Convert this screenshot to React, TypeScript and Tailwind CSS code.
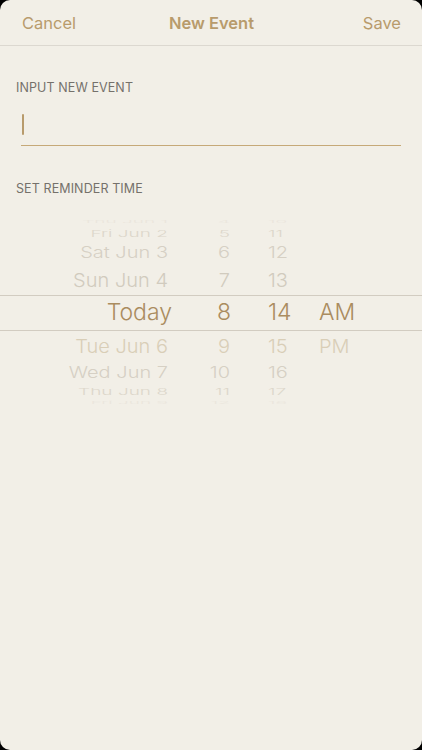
import React from "react";

type Row = {
  h: string;
  scale: string;
  date: string;
  hour: string;
  min: string;
  ampm?: string;
  color: string;
  size: string;
};

const rows: Row[] = [
  { h: "h-[10px]", scale: "scale-y-[0.2]", date: "Thu Jun 1", hour: "4", min: "10", color: "text-[#ebe6dd]", size: "text-[19px]" },
  { h: "h-[14px]", scale: "scale-y-[0.5]", date: "Fri Jun 2", hour: "5", min: "11", color: "text-[#ddd7cb]", size: "text-[19px]" },
  { h: "h-[24px]", scale: "scale-y-[0.78]", date: "Sat Jun 3", hour: "6", min: "12", color: "text-[#d6d0c4]", size: "text-[20px]" },
  { h: "h-[30px]", scale: "scale-y-[0.93]", date: "Sun Jun 4", hour: "7", min: "13", color: "text-[#d1cbbe]", size: "text-[20px]" },
];

const rowsBelow: Row[] = [
  { h: "h-[30px]", scale: "scale-y-[0.93]", date: "Tue Jun 6", hour: "9", min: "15", ampm: "PM", color: "text-[#d9ceb7]", size: "text-[20px]" },
  { h: "h-[24px]", scale: "scale-y-[0.78]", date: "Wed Jun 7", hour: "10", min: "16", color: "text-[#d6d0c4]", size: "text-[20px]" },
  { h: "h-[14px]", scale: "scale-y-[0.5]", date: "Thu Jun 8", hour: "11", min: "17", color: "text-[#ddd7cb]", size: "text-[19px]" },
  { h: "h-[8px]", scale: "scale-y-[0.2]", date: "Fri Jun 9", hour: "12", min: "18", color: "text-[#ebe6dd]", size: "text-[19px]" },
];

function PickerRow({ r }: { r: Row }) {
  return (
    <div className={`${r.h} flex items-center overflow-hidden ${r.color} ${r.size} font-light`}>
      <div className={`flex w-full items-center ${r.scale} leading-none`}>
        <div className="w-[168px] text-right">{r.date}</div>
        <div className="w-[62px] text-right">{r.hour}</div>
        <div className="w-[38px]" />
        <div className="w-[51px]">{r.min}</div>
        <div>{r.ampm ?? ""}</div>
      </div>
    </div>
  );
}

export default function App() {
  return (
    <div className="h-[750px] w-[422px] bg-black" style={{ fontFamily: "Inter, 'Noto Sans', sans-serif" }}>
      <div className="flex h-[750px] w-[422px] flex-col rounded-[10px] bg-[#f2efe7]">
        <div className="flex h-[46px] items-center border-b border-[#dcd8d0] pl-[22px] pr-[21px] pt-[1px] text-[16.5px] text-[#b89b6c]">
          <span className="flex-1">Cancel</span>
          <span className="font-semibold">New Event</span>
          <span className="flex-1 text-right">Save</span>
        </div>

        <div className="pl-4 pt-[33px] text-[12.5px] tracking-[0.1px] text-[#75716b]">INPUT NEW EVENT</div>
        <div className="mx-[21px] mt-[16px] flex h-[32px] items-start border-b border-[#c6a978]">
          <div className="ml-[1px] h-[21px] w-[2px] rounded bg-[#b89b6c]" />
        </div>

        <div className="pl-4 pt-[34px] text-[12.5px] tracking-[0.1px] text-[#75716b]">SET REMINDER TIME</div>

        <div className="mt-[18px] flex flex-col">
          {rows.map((r) => (
            <PickerRow key={r.date} r={r} />
          ))}
          <div className="flex h-[36px] items-center border-y border-[#d2ccc1] text-[23px] font-light leading-none text-[#aa8c5f]">
            <div className="w-[172px] text-right">Today</div>
            <div className="w-[59px] text-right">8</div>
            <div className="w-[37px]" />
            <div className="w-[51px]">14</div>
            <div>AM</div>
          </div>
          {rowsBelow.map((r) => (
            <PickerRow key={r.date} r={r} />
          ))}
        </div>
      </div>
    </div>
  );
}
